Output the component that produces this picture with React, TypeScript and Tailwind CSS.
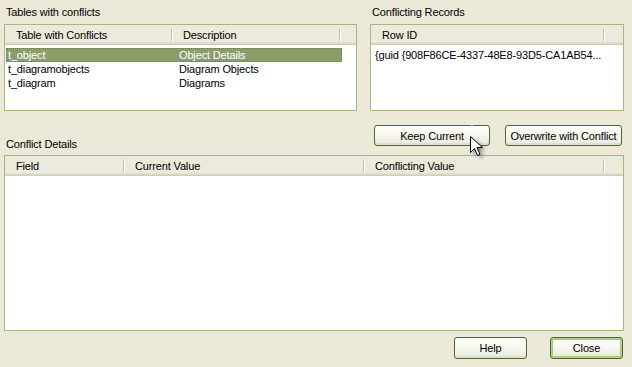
import React from "react";

const Divider = () => (
  <div className="self-center h-[14px] w-[2px] shrink-0 border-l border-l-[#C7C5B2] border-r border-r-white" />
);

const Header = ({ cols }: { cols: { label: string; w: string; pl: string }[] }) => (
  <div className="flex h-[20px] bg-[#EBEADB] shadow-[inset_0_-1px_0_#D0CCB8,inset_0_-2px_0_#DCD8C4,inset_0_-3px_0_#E4E1CF]">
    {cols.map((c, i) => (
      <React.Fragment key={i}>
        <div className={`${c.w} ${c.pl} shrink-0 flex items-center leading-[14px] pb-[1px]`}>{c.label}</div>
        <Divider />
      </React.Fragment>
    ))}
    <div className="flex-1" />
  </div>
);

const Btn = ({ label, cls, def }: { label: string; cls: string; def?: boolean }) => (
  <button
    className={`${cls} rounded-[3px] border border-[#4A6A2B] bg-gradient-to-b from-[#FFFFFA] via-[#F7F6EE] to-[#E9E8DC] text-black text-[11px] leading-[14px] flex items-center justify-center ${
      def
        ? "shadow-[inset_0_0_0_1px_#B9CF92,inset_0_0_0_2px_#A9C47D]"
        : "shadow-[inset_0_-2px_0_#E0DED0]"
    }`}
  >
    {label}
  </button>
);

export default function App() {
  return (
    <div className="relative w-[632px] h-[367px] bg-[#ECE9D8] text-[11px] text-black font-['Liberation_Sans',Arial,sans-serif] tracking-[-0.15px] overflow-hidden">
      <div className="w-[620px] ml-[4px] pt-[5px]">
        {/* top row */}
        <div className="flex gap-[13px]">
          <div className="w-[353px]">
            <div className="h-[14px] leading-[14px] pl-[2px]">Tables with conflicts</div>
            <div className="mt-[5px] h-[87px] border border-[#A4B97F] bg-white">
              <Header
                cols={[
                  { label: "Table with Conflicts", w: "w-[166px]", pl: "pl-[11px]" },
                  { label: "Description", w: "w-[166px]", pl: "pl-[10px]" },
                ]}
              />
              <div className="pt-[3px]">
                <div className="ml-[1px] w-[336px] h-[14px] flex items-center bg-[#8B9E69] text-white border border-dotted border-[#6E8050]">
                  <div className="w-[172px] pl-[1px] leading-[12px]">t_object</div>
                  <div className="leading-[12px]">Object Details</div>
                </div>
                <div className="ml-[1px] w-[336px] h-[14px] flex items-center">
                  <div className="w-[173px] pl-[2px] leading-[14px]">t_diagramobjects</div>
                  <div className="leading-[14px]">Diagram Objects</div>
                </div>
                <div className="ml-[1px] w-[336px] h-[14px] flex items-center">
                  <div className="w-[173px] pl-[2px] leading-[14px]">t_diagram</div>
                  <div className="leading-[14px]">Diagrams</div>
                </div>
              </div>
            </div>
          </div>
          <div className="w-[254px]">
            <div className="h-[14px] leading-[14px] pl-[2px]">Conflicting Records</div>
            <div className="mt-[5px] h-[87px] border border-[#A4B97F] bg-white">
              <Header cols={[{ label: "Row ID", w: "w-[232px]", pl: "pl-[11px]" }]} />
              <div className="pt-[3px]">
                <div className="h-[14px] pl-[4px] leading-[14px] whitespace-nowrap">
                  {"{guid {908F86CE-4337-48E8-93D5-CA1AB54..."}
                </div>
              </div>
            </div>
          </div>
        </div>

        {/* middle row */}
        <div className="mt-[14px] h-[30px] flex justify-between items-start">
          <div className="mt-[12px] pl-[2px] h-[14px] leading-[14px]">Conflict Details</div>
          <div className="flex gap-[15px] mr-[2px]">
            <Btn label="Keep Current" cls="w-[116px] h-[21px]" />
            <Btn label="Overwrite with Conflict" cls="w-[117px] h-[21px]" />
          </div>
        </div>

        {/* conflict details box */}
        <div className="h-[176px] border border-[#A4B97F] bg-white">
          <Header
            cols={[
              { label: "Field", w: "w-[118px]", pl: "pl-[11px]" },
              { label: "Current Value", w: "w-[238px]", pl: "pl-[10px]" },
              { label: "Conflicting Value", w: "w-[238px]", pl: "pl-[10px]" },
            ]}
          />
        </div>

        {/* bottom buttons */}
        <div className="mt-[6px] flex justify-end gap-[23px] mr-[1px]">
          <Btn label="Help" cls="w-[73px] h-[22px]" />
          <Btn label="Close" cls="w-[73px] h-[22px]" def />
        </div>
      </div>

      {/* mouse cursor overlay */}
      <svg
        className="absolute left-[462px] top-[117px] pointer-events-none"
        width="40"
        height="46"
        viewBox="0 0 40 46"
      >
        <defs>
          <filter id="blur" x="-50%" y="-50%" width="200%" height="200%">
            <feGaussianBlur stdDeviation="2" />
          </filter>
        </defs>
        <g stroke="#ffffff" strokeWidth="0.8" opacity="0.8">
          <line x1="2" y1="10" x2="18" y2="10" />
          <line x1="10" y1="2" x2="10" y2="18" />
          <line x1="4" y1="4" x2="16" y2="16" opacity="0.5" />
          <line x1="16" y1="4" x2="4" y2="16" opacity="0.5" />
        </g>
        <path
          d="M11 22 L11 38 L15 34 L18 41 L21 40 L18 33 L23 33 Z"
          fill="#000"
          opacity="0.45"
          filter="url(#blur)"
        />
        <path
          d="M8.5 19.5 L8.5 35.5 L12.5 31.5 L15.5 38.5 L18 37.5 L15 30.5 L20.5 30.5 Z"
          fill="#fff"
          stroke="#000"
          strokeWidth="1"
          strokeLinejoin="miter"
        />
      </svg>
    </div>
  );
}
